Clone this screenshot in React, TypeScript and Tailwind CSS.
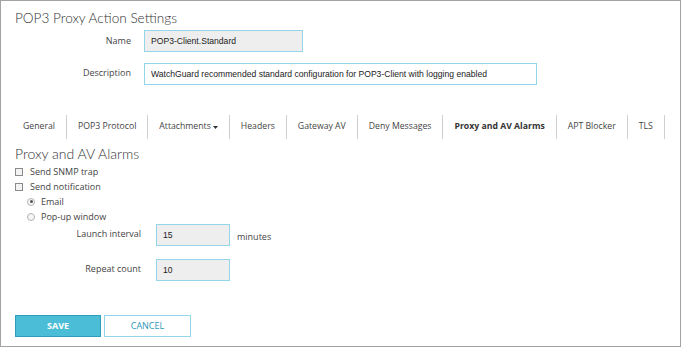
const tabs = [
  "General",
  "POP3 Protocol",
  "Attachments",
  "Headers",
  "Gateway AV",
  "Deny Messages",
  "Proxy and AV Alarms",
  "APT Blocker",
  "TLS",
];

const label = "font-['Open_Sans',sans-serif] text-[9px] text-[#444] whitespace-nowrap";
const input =
  "h-[22px] border border-[#93d6ea] px-[6px] font-['Liberation_Sans',Arial,sans-serif] text-[8.6px] text-[#222] outline-none";

function Check({ text }: { text: string }) {
  return (
    <label className="flex h-[15px] items-center gap-[7px]">
      <span className="h-[8px] w-[8px] border border-[#8a8a8a] bg-[#f3f3f3]" />
      <span className={label}>{text}</span>
    </label>
  );
}

function Radio({ text, on }: { text: string; on?: boolean }) {
  return (
    <label className="flex h-[15px] items-center gap-[6px]">
      <span className="flex h-[8px] w-[8px] items-center justify-center rounded-full border border-[#b5b5b5] bg-[#f5f5f5]">
        {on && <span className="h-[3px] w-[3px] rounded-full bg-[#555]" />}
      </span>
      <span className={label}>{text}</span>
    </label>
  );
}

export default function App() {
  return (
    <div className="h-[347px] w-[681px] border border-[#a3a3a3] bg-white">
      <div className="pl-[14px] pt-[7px]">
        <h1 className="font-['Lato',sans-serif] text-[13.6px] font-light leading-[20px] text-[#333]">
          POP3 Proxy Action Settings
        </h1>

        {/* name / description */}
        <div className="mt-[2px] flex items-center">
          <div className={`${label} w-[116px] text-right`}>Name</div>
          <input
            readOnly
            value="POP3-Client.Standard"
            className={`${input} ml-[13px] w-[159px] bg-[#eeeeee]`}
          />
        </div>
        <div className="mt-[11px] flex items-center">
          <div className={`${label} -mt-[3px] w-[116px] text-right`}>Description</div>
          <input
            readOnly
            value="WatchGuard recommended standard configuration for POP3-Client with logging enabled"
            className={`${input} ml-[13px] w-[393px] bg-white`}
          />
        </div>

        {/* tabs */}
        <div className="mt-[30px] flex h-[24px] items-stretch pl-[8px]">
          {tabs.map((t, i) => (
            <div
              key={t}
              className={`flex items-center whitespace-nowrap border-r border-[#cfcfcf] pr-[11px] font-['Open_Sans',sans-serif] text-[8.7px] ${
                i === 0 ? "pl-0" : "pl-[11px]"
              } ${t === "Proxy and AV Alarms" ? "font-bold text-[#333]" : "text-[#444]"}`}
            >
              {t}
              {t === "Attachments" && (
                <svg width="5" height="3" viewBox="0 0 5 3" className="ml-[2px]">
                  <path d="M0 0h5L2.5 3z" fill="#333" />
                </svg>
              )}
            </div>
          ))}
        </div>

        <h2 className="mt-[6px] font-['Lato',sans-serif] text-[14px] font-light leading-[18px] text-[#333]">
          Proxy and AV Alarms
        </h2>

        <div className="mt-[1px] flex flex-col">
          <Check text="Send SNMP trap" />
          <Check text="Send notification" />
          <div className="flex flex-col pl-[12px]">
            <Radio text="Email" on />
            <Radio text="Pop-up window" />
          </div>
        </div>

        <div className="flex items-start">
          <div className={`${label} mt-[3px] w-[126px] text-right`}>Launch interval</div>
          <input readOnly value="15" className={`${input} ml-[15px] w-[74px] bg-[#eeeeee]`} />
          <span className={`${label} ml-[7px] mt-[6px]`}>minutes</span>
        </div>
        <div className="mt-[13px] flex items-start">
          <div className={`${label} mt-[3px] w-[126px] text-right`}>Repeat count</div>
          <input readOnly value="10" className={`${input} ml-[15px] w-[74px] bg-[#eeeeee]`} />
        </div>

        <div className="mt-[34px] flex gap-[3px]">
          <button className="h-[22px] w-[86px] border border-[#2d9dbb] bg-[#4bbdd6] font-['Open_Sans',sans-serif] text-[9px] font-bold text-white">
            SAVE
          </button>
          <button className="h-[22px] w-[87px] border border-[#93d6ea] bg-white font-['Open_Sans',sans-serif] text-[9px] text-[#2a96ba]">
            CANCEL
          </button>
        </div>
      </div>
    </div>
  );
}
